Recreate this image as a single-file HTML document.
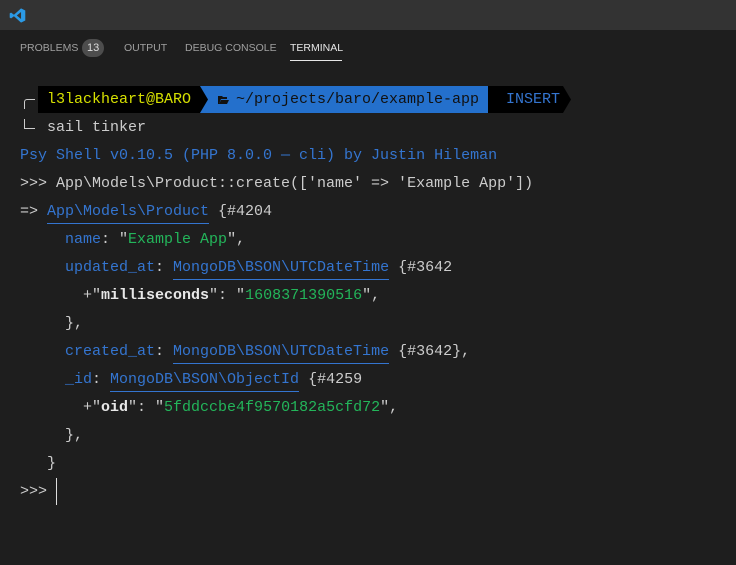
<!DOCTYPE html>
<html><head><style>
body{margin:0;width:736px;height:565px;background:#1e1e1e;overflow:hidden;position:relative;font-family:"Liberation Mono",monospace}
.tb{position:absolute;left:0;top:0;width:736px;height:30px;background:#333333}
.tabs{position:absolute;top:42px;left:20px;font-family:"Liberation Sans",sans-serif;font-size:10.5px;color:#a0a0a0;}
.tabs span{position:absolute;white-space:nowrap;top:0}
.badge{background:#4d4d4d;color:#ddd;border-radius:10px;padding:3px 5px;top:-3px!important;font-size:11px}
.l{position:absolute;left:20px;font-size:15px;line-height:20px;height:20px;color:#cccccc;white-space:pre}
.b{color:#3475d0}.g{color:#23b55a}.u{border-bottom:1px solid #3475d0;padding-bottom:3px}
.w{color:#e8e8e8;font-weight:bold}
</style></head><body>
<div class="tb"></div>
<svg style="position:absolute;left:9px;top:7px" width="17" height="17" viewBox="0 0 24 24"><path d="M17 2 L23 5 V19 L17 22 L7 13 L3 16 L1 15 V9 L3 8 L7 11 Z M17 7 L11 12 L17 17 Z" fill="#2b9ae6" fill-rule="evenodd"/></svg>
<div class="tabs">
<span style="left:0">PROBLEMS</span><span class="badge" style="left:62px">13</span>
<span style="left:104px">OUTPUT</span><span style="left:165px">DEBUG CONSOLE</span>
<span style="left:270px;color:#e7e7e7">TERMINAL</span>
</div>
<div style="position:absolute;left:290px;top:60px;width:52px;height:1px;background:#e7e7e7"></div>
<!-- prompt -->
<div style="position:absolute;left:38px;top:86px;width:162px;height:27px;background:#000"></div>
<div style="position:absolute;left:200px;top:86px;width:288px;height:27px;background:#2470cc"></div>
<svg style="position:absolute;left:200px;top:86px" width="10" height="27"><path d="M0 0 L8 13.5 L0 27Z" fill="#000"/></svg>
<svg style="position:absolute;left:488px;top:86px" width="10" height="27"><path d="M0 0 L8 13.5 L0 27Z" fill="#2470cc"/></svg>
<div style="position:absolute;left:488px;top:86px;width:75px;height:27px;background:#000"></div>
<svg style="position:absolute;left:563px;top:86px" width="10" height="27"><path d="M0 0 L8 13.5 L0 27Z" fill="#000"/></svg>
<div style="position:absolute;left:24px;top:99px;width:10px;height:9px;border-left:1px solid #ccc;border-top:1px solid #ccc;border-radius:3px 0 0 0"></div>
<div style="position:absolute;left:24px;top:119px;width:10px;height:9px;border-left:1px solid #ccc;border-bottom:1px solid #ccc"></div>
<div class="l" style="top:90px;left:47px;color:#d6e000">l3lackheart@BARO</div>
<svg style="position:absolute;left:218px;top:95px" width="11" height="9"><path d="M0 1 H4 L5 2 H9 V4 H3 L1 9 H0Z M3 5 H11 L9 9 H1Z" fill="#111"/></svg>
<div class="l" style="top:90px;left:236px;color:#111">~/projects/baro/example-app</div>
<div class="l b" style="top:90px;left:506px">INSERT</div>
<div class="l" style="top:118px;left:47px">sail tinker</div>
<div class="l b" style="top:146px">Psy Shell v0.10.5 (PHP 8.0.0 — cli) by Justin Hileman</div>
<div class="l" style="top:174px">&gt;&gt;&gt; App\Models\Product::create(['name' =&gt; 'Example App'])</div>
<div class="l" style="top:202px">=&gt; <span class="b u">App\Models\Product</span> {#4204</div>
<div class="l" style="top:230px;left:65px"><span class="b">name</span>: "<span class="g">Example App</span>",</div>
<div class="l" style="top:258px;left:65px"><span class="b">updated_at</span>: <span class="b u">MongoDB\BSON\UTCDateTime</span> {#3642</div>
<div class="l" style="top:286px;left:83px">+"<span class="w">milliseconds</span>": "<span class="g">1608371390516</span>",</div>
<div class="l" style="top:314px;left:65px">},</div>
<div class="l" style="top:342px;left:65px"><span class="b">created_at</span>: <span class="b u">MongoDB\BSON\UTCDateTime</span> {#3642},</div>
<div class="l" style="top:370px;left:65px"><span class="b">_id</span>: <span class="b u">MongoDB\BSON\ObjectId</span> {#4259</div>
<div class="l" style="top:398px;left:83px">+"<span class="w">oid</span>": "<span class="g">5fddccbe4f9570182a5cfd72</span>",</div>
<div class="l" style="top:426px;left:65px">},</div>
<div class="l" style="top:454px;left:47px">}</div>
<div class="l" style="top:482px">&gt;&gt;&gt;</div>
<div style="position:absolute;left:56px;top:478px;width:1px;height:27px;background:#ddd"></div>
</body></html>
